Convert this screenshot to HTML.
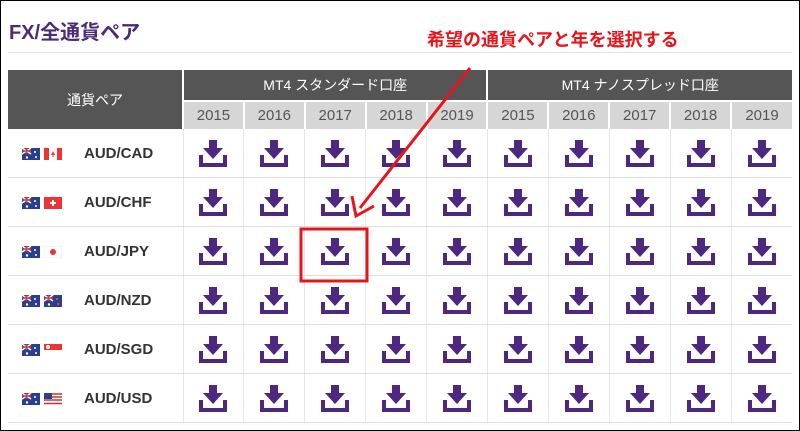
<!DOCTYPE html><html><head><meta charset="utf-8"><style>
body{margin:0;width:800px;height:431px;overflow:hidden;background:#fff;font-family:"Liberation Sans","Noto Sans CJK JP",sans-serif;position:relative}
.frame{position:absolute;left:0;top:0;width:798px;height:429px;border:1px solid #000}
.title{position:absolute;left:9px;top:16px;font-size:20px;font-weight:bold;color:#4b2a7a}
.hr{position:absolute;left:8px;top:52px;width:784px;height:1px;background:#e2e2e2}
.note{position:absolute;left:427px;top:26px;font-size:18px;font-weight:bold;color:#e8141a}
table{position:absolute;left:8px;top:70px;border-collapse:collapse;table-layout:fixed;width:784px}
td{padding:0;text-align:center;vertical-align:middle}
.h1{background:#555;color:#fff;height:30px;font-size:14px;border-left:2px solid #fff}
.h0{background:#555;color:#fff;font-size:14px}
.h2{background:#d6d6d6;color:#555;height:27px;font-size:15px;border-left:2px solid #fff;border-top:2px solid #fff}
.d td{height:48px;border-bottom:1px solid #ddd;border-left:1px solid #e6e6e6}
.d td:first-child{border-left:none;text-align:left;font-size:15px;font-weight:bold;color:#333}
.fl{vertical-align:middle;margin-right:4px}
</style></head><body>
<div class="frame"></div>
<div class="title">FX/全通貨ペア</div>
<div class="hr"></div>
<div class="note">希望の通貨ペアと年を選択する</div>
<svg width="0" height="0" style="position:absolute"><defs>
<g id="ic" fill="#4e2780"><rect x="10" y="0" width="8" height="9"/><polygon points="4,8 24,8 14,19"/><rect x="0" y="15" width="4" height="12"/><rect x="24" y="15" width="4" height="12"/><rect x="0" y="23" width="28" height="4"/></g>
<g id="au"><rect width="18" height="12" fill="#2a3f8f"/><path d="M0 0L9 6M9 0L0 6" stroke="#fff" stroke-width="1.5"/><path d="M4.5 0V6M0 3H9" stroke="#d33" stroke-width="1.5"/><circle cx="13" cy="4" r="1" fill="#fff"/><circle cx="14" cy="9" r="1" fill="#fff"/><circle cx="5" cy="9.5" r="1.2" fill="#fff"/></g>
<g id="ca"><rect width="18" height="12" fill="#fff"/><rect width="5" height="12" fill="#e33"/><rect x="13" width="5" height="12" fill="#e33"/><path d="M9 3L11 7H7Z" fill="#e33"/><rect x="8.5" y="7" width="1" height="2" fill="#e33"/></g>
<g id="ch"><rect width="18" height="12" fill="#e33"/><rect x="8" y="3" width="2" height="6" fill="#fff"/><rect x="6" y="5" width="6" height="2" fill="#fff"/></g>
<g id="jp"><rect width="18" height="12" fill="#fff" stroke="#ddd" stroke-width=".5"/><circle cx="9" cy="6" r="3" fill="#e33"/></g>
<g id="nz"><use href="#au"/><circle cx="13" cy="4" r="1" fill="#d33"/><circle cx="14" cy="9" r="1" fill="#d33"/></g>
<g id="sg"><rect width="18" height="6" fill="#e33"/><rect y="6" width="18" height="6" fill="#fff"/><circle cx="4" cy="3" r="2" fill="#fff"/></g>
<g id="us"><rect width="18" height="12" fill="#fff"/><path d="M0 1H18M0 4H18M0 7H18M0 10.5H18" stroke="#c33" stroke-width="1.5"/><rect width="8" height="6" fill="#2a3f8f"/></g>
</defs></svg>
<table>
<colgroup><col style="width:175px"><col span="10" style="width:60.9px"></colgroup>
<tr><td class="h0" rowspan="2">通貨ペア</td><td class="h1" colspan="5">MT4 スタンダード口座</td><td class="h1" colspan="5">MT4 ナノスプレッド口座</td></tr>
<tr><td class="h2">2015</td><td class="h2">2016</td><td class="h2">2017</td><td class="h2">2018</td><td class="h2">2019</td><td class="h2">2015</td><td class="h2">2016</td><td class="h2">2017</td><td class="h2">2018</td><td class="h2">2019</td></tr>
</table>
<script>
var pairs=[["AUD/CAD","ca"],["AUD/CHF","ch"],["AUD/JPY","jp"],["AUD/NZD","nz"],["AUD/SGD","sg"],["AUD/USD","us"]];
var t=document.querySelector('table');var h='';
pairs.forEach(function(p){h+='<tr class="d"><td><span style="margin-left:14px"></span><svg class="fl" width="18" height="12"><use href="#au"/></svg><svg class="fl" width="18" height="12"><use href="#'+p[1]+'"/></svg><span style="margin-left:18px">'+p[0]+'</span></td>';
for(var i=0;i<10;i++)h+='<td><svg width="28" height="27" style="vertical-align:middle"><use href="#ic"/></svg></td>';h+='</tr>';});
t.insertAdjacentHTML('beforeend',h);
</script>
<svg style="position:absolute;left:0;top:0" width="800" height="431">
<rect x="301" y="229" width="66" height="52" fill="none" stroke="#e8141a" stroke-width="3"/>
<line x1="470" y1="68" x2="360" y2="208" stroke="#e8141a" stroke-width="3"/>
<polyline points="352,196 356,216 374,206" fill="none" stroke="#e8141a" stroke-width="3"/>
</svg>
</body></html>
